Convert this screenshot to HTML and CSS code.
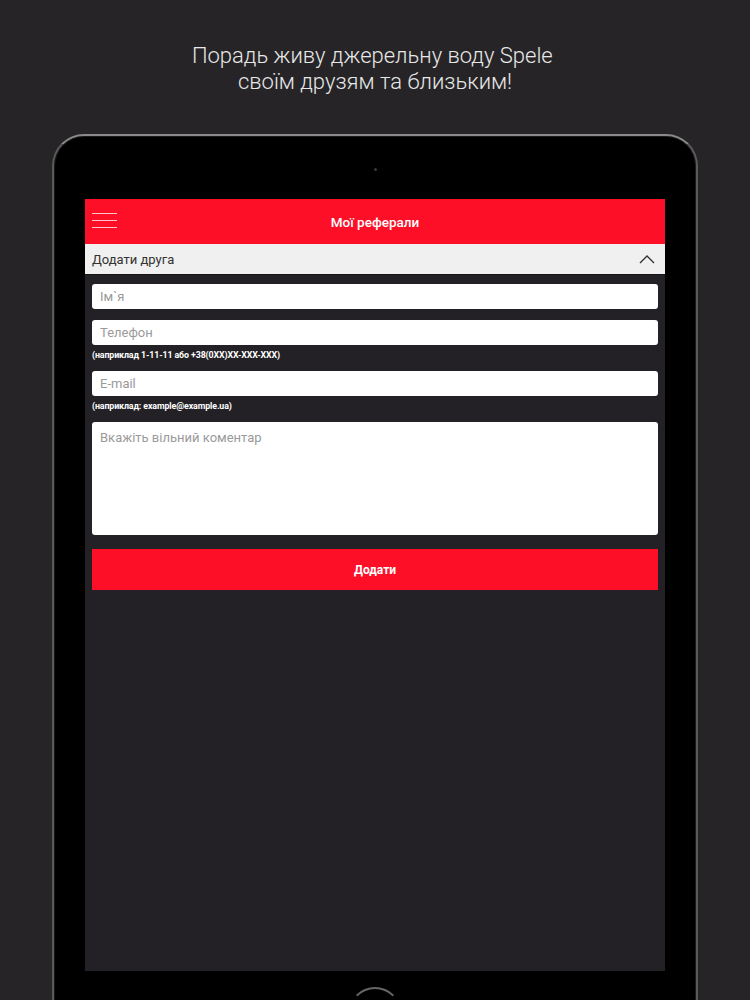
FILE: index.html
```html
<!DOCTYPE html>
<html lang="uk">
<head>
<meta charset="utf-8">
<title>Мої реферали</title>
<link rel="stylesheet" href="styles.css">
</head>
<body>
<div class="promo">
  <p class="promo-text">Порадь живу джерельну воду Spele&nbsp;<br>своїм друзям та близьким!</p>
</div>
<div class="tablet">
  <div class="camera"></div>
  <div class="screen">
    <div class="appbar">
      <div class="burger"><span></span><span></span><span></span></div>
      <div class="appbar-title">Мої реферали</div>
    </div>
    <div class="accordion">
      <span>Додати друга</span>
      <svg class="chevron" width="16" height="10" viewBox="0 0 16 10"><path d="M1 9 L8 2 L15 9" fill="none" stroke="#333" stroke-width="1.4"/></svg>
    </div>
    <form class="form">
      <div class="field"><div class="input">Ім`я</div></div>
      <div class="field">
        <div class="input">Телефон</div>
        <div class="hint">(наприклад 1-11-11 або +38(0XX)XX-XXX-XXX)</div>
      </div>
      <div class="field">
        <div class="input">E-mail</div>
        <div class="hint">(наприклад: example@example.ua)</div>
      </div>
      <div class="field"><div class="input textarea">Вкажіть вільний коментар</div></div>
      <div class="button">Додати</div>
    </form>
  </div>
  <div class="home"></div>
</div>
</body>
</html>
```
FILE: styles.css
```css
html, body {
  margin: 0;
  padding: 0;
  background: #262427;
  height: 1000px;
  overflow: hidden;
}
body {
  font-family: Roboto, "Liberation Sans", sans-serif;
}
.promo {
  padding-top: 43px;
  text-align: center;
  color: #e8e8e8;
  font-family: Roboto, "Liberation Sans", sans-serif;
  font-weight: 300;
  font-size: 22px;
  letter-spacing: 0;
  line-height: 26px;
}
.promo-text {
  margin: 0;
}
.tablet {
  position: relative;
  width: 642px;
  height: 900px;
  margin: 39px auto 0;
  background: #000;
  border: 2px solid #5a5a5a;
  border-top-color: #8a8a8a;
  border-radius: 32px 32px 0 0;
  box-shadow: inset 0 0 0 1px #1a1a1a;
  display: flex;
  flex-direction: column;
  align-items: center;
}
.camera {
  flex-shrink: 0;
  width: 3px;
  height: 3px;
  border-radius: 50%;
  background: #3a3a3a;
  margin-top: 32px;
}
.screen {
  flex-shrink: 0;
  margin-top: 28px;
  width: 580px;
  height: 772px;
  background: #232125;
  display: flex;
  flex-direction: column;
}
.appbar {
  height: 45px;
  background: #fd1027;
  display: flex;
  align-items: center;
  position: relative;
}
.burger {
  position: absolute;
  left: 7px;
  top: 14px;
  display: flex;
  flex-direction: column;
  gap: 6px;
}
.burger span {
  display: block;
  width: 25px;
  height: 1px;
  background: #ffc4c9;
}
.appbar-title {
  flex: 1;
  text-align: center;
  color: #fff;
  font-size: 13.5px;
  font-weight: 500;
}
.accordion {
  height: 30px;
  background: #f0f0f0;
  display: flex;
  align-items: center;
  justify-content: space-between;
  padding: 0 10px 0 7px;
  color: #333;
  font-size: 13px;
  border-bottom: 1px solid #151515;
}
.chevron {
  display: block;
}
.form {
  margin: 0;
  padding: 9px 7px 0 7px;
  display: flex;
  flex-direction: column;
}
.field {
  display: flex;
  flex-direction: column;
  margin-bottom: 11px;
}
.input {
  height: 25px;
  background: #fff;
  border-radius: 3px;
  color: #9a9a9a;
  font-size: 13px;
  line-height: 25px;
  padding-left: 8px;
}
.textarea {
  height: 113px;
  line-height: 16px;
  padding-top: 8px;
  box-sizing: border-box;
}
.hint {
  color: #fff;
  font-size: 8.8px;
  font-weight: 700;
  letter-spacing: -0.1px;
  line-height: 10px;
  margin-top: 5px;
}
.button {
  height: 41px;
  margin-top: 3px;
  background: #fd1027;
  color: #fff;
  font-size: 12px;
  font-weight: 700;
  display: flex;
  align-items: center;
  justify-content: center;
}
.home {
  flex-shrink: 0;
  margin-top: 16px;
  width: 50px;
  height: 50px;
  border-radius: 50%;
  border: 2px solid transparent;
  border-top-color: #666;
}
```
